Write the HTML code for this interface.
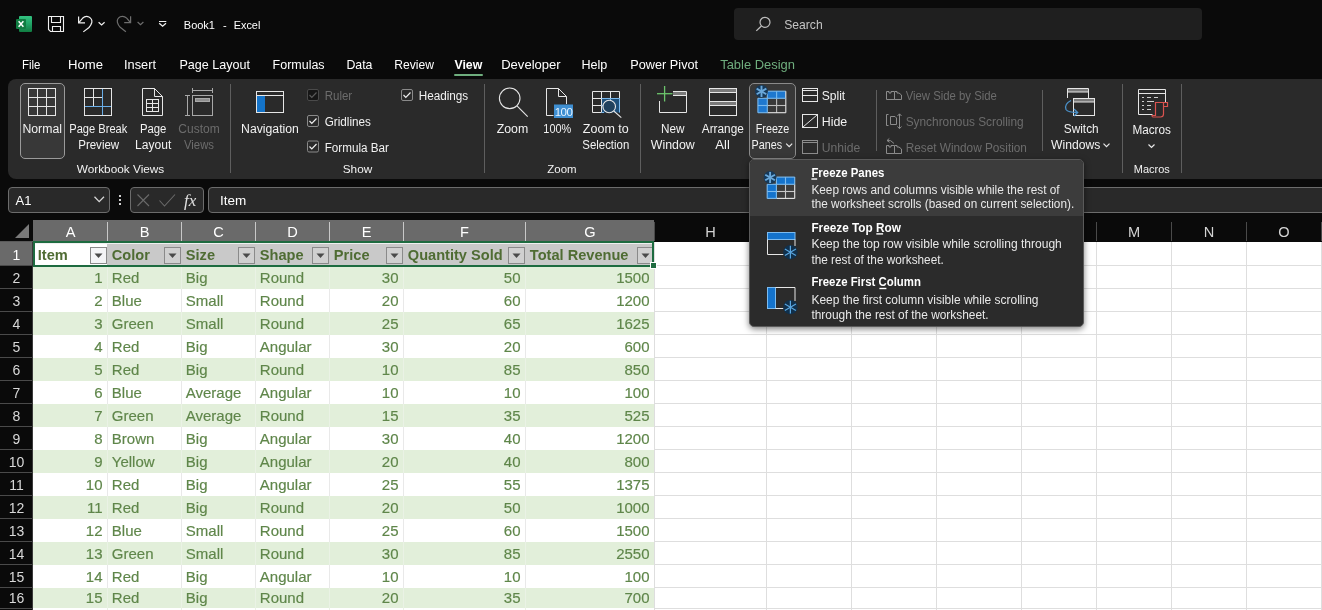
<!DOCTYPE html><html><head><meta charset="utf-8"><style>
html,body{margin:0;padding:0;background:#0a0a0a;}
#root{position:relative;width:1322px;height:610px;overflow:hidden;background:#0a0a0a;font-family:"Liberation Sans", sans-serif;}
.r{position:absolute;}
svg{position:absolute;left:0;top:0;overflow:visible;will-change:transform;font-family:"Liberation Sans", sans-serif;}
</style></head><body><div id="root">
<div class="r" style="left:734px;top:8px;width:468px;height:32px;background:#1f1f1f;border-radius:4px;"></div>
<div class="r" style="left:454px;top:74px;width:29px;height:2px;background:#6fae7e;border-radius:1px;"></div>
<div class="r" style="left:8px;top:79px;width:1330px;height:100px;background:#2a2a2a;border-radius:8px;"></div>
<div class="r" style="left:20px;top:83px;width:45px;height:76px;background:#383838;box-sizing:border-box;border:1px solid #9a9a9a;border-radius:5px;"></div>
<div class="r" style="left:749px;top:83px;width:47px;height:76px;background:#383838;box-sizing:border-box;border:1px solid #8a8a8a;border-radius:5px;"></div>
<div class="r" style="left:230px;top:84px;width:1px;height:89px;background:#5e5e5e;"></div>
<div class="r" style="left:484px;top:84px;width:1px;height:89px;background:#5e5e5e;"></div>
<div class="r" style="left:640px;top:84px;width:1px;height:89px;background:#5e5e5e;"></div>
<div class="r" style="left:876px;top:90px;width:1px;height:61px;background:#5e5e5e;"></div>
<div class="r" style="left:1042px;top:90px;width:1px;height:61px;background:#5e5e5e;"></div>
<div class="r" style="left:1122px;top:84px;width:1px;height:89px;background:#5e5e5e;"></div>
<div class="r" style="left:1181px;top:84px;width:1px;height:89px;background:#5e5e5e;"></div>
<div class="r" style="left:8px;top:187px;width:102px;height:26px;background:#292929;border:1px solid #6c6c6c;border-radius:4px;box-sizing:border-box;"></div>
<div class="r" style="left:118.5px;top:195px;width:2px;height:2px;background:#d0d0d0;"></div>
<div class="r" style="left:118.5px;top:199px;width:2px;height:2px;background:#d0d0d0;"></div>
<div class="r" style="left:118.5px;top:203px;width:2px;height:2px;background:#d0d0d0;"></div>
<div class="r" style="left:130px;top:187px;width:74px;height:26px;background:#292929;border:1px solid #6c6c6c;border-radius:4px;box-sizing:border-box;"></div>
<div class="r" style="left:208px;top:187px;width:1120px;height:26px;background:#292929;border:1px solid #6c6c6c;border-radius:4px;box-sizing:border-box;"></div>
<div class="r" style="left:33px;top:220px;width:621px;height:22px;background:#6a6a6a;"></div>
<div class="r" style="left:107px;top:222px;width:1px;height:19px;background:#c8c8c8;"></div>
<div class="r" style="left:181px;top:222px;width:1px;height:19px;background:#c8c8c8;"></div>
<div class="r" style="left:255px;top:222px;width:1px;height:19px;background:#c8c8c8;"></div>
<div class="r" style="left:329px;top:222px;width:1px;height:19px;background:#c8c8c8;"></div>
<div class="r" style="left:403px;top:222px;width:1px;height:19px;background:#c8c8c8;"></div>
<div class="r" style="left:525px;top:222px;width:1px;height:19px;background:#c8c8c8;"></div>
<div class="r" style="left:654px;top:222px;width:1px;height:19px;background:#4a4a4a;"></div>
<div class="r" style="left:766px;top:222px;width:1px;height:19px;background:#4a4a4a;"></div>
<div class="r" style="left:851px;top:222px;width:1px;height:19px;background:#4a4a4a;"></div>
<div class="r" style="left:936px;top:222px;width:1px;height:19px;background:#4a4a4a;"></div>
<div class="r" style="left:1021px;top:222px;width:1px;height:19px;background:#4a4a4a;"></div>
<div class="r" style="left:1096px;top:222px;width:1px;height:19px;background:#4a4a4a;"></div>
<div class="r" style="left:1171px;top:222px;width:1px;height:19px;background:#4a4a4a;"></div>
<div class="r" style="left:1246px;top:222px;width:1px;height:19px;background:#4a4a4a;"></div>
<div class="r" style="left:1321px;top:222px;width:1px;height:19px;background:#4a4a4a;"></div>
<div class="r" style="left:33px;top:242px;width:1289px;height:368px;background:#ffffff;"></div>
<div class="r" style="left:0px;top:242px;width:33px;height:23px;background:#6a6a6a;"></div>
<div class="r" style="left:0px;top:265px;width:33px;height:1px;background:#4a4a4a;"></div>
<div class="r" style="left:0px;top:288px;width:33px;height:1px;background:#4a4a4a;"></div>
<div class="r" style="left:0px;top:311px;width:33px;height:1px;background:#4a4a4a;"></div>
<div class="r" style="left:0px;top:334px;width:33px;height:1px;background:#4a4a4a;"></div>
<div class="r" style="left:0px;top:357px;width:33px;height:1px;background:#4a4a4a;"></div>
<div class="r" style="left:0px;top:380px;width:33px;height:1px;background:#4a4a4a;"></div>
<div class="r" style="left:0px;top:403px;width:33px;height:1px;background:#4a4a4a;"></div>
<div class="r" style="left:0px;top:426px;width:33px;height:1px;background:#4a4a4a;"></div>
<div class="r" style="left:0px;top:449px;width:33px;height:1px;background:#4a4a4a;"></div>
<div class="r" style="left:0px;top:472px;width:33px;height:1px;background:#4a4a4a;"></div>
<div class="r" style="left:0px;top:495px;width:33px;height:1px;background:#4a4a4a;"></div>
<div class="r" style="left:0px;top:518px;width:33px;height:1px;background:#4a4a4a;"></div>
<div class="r" style="left:0px;top:541px;width:33px;height:1px;background:#4a4a4a;"></div>
<div class="r" style="left:0px;top:564px;width:33px;height:1px;background:#4a4a4a;"></div>
<div class="r" style="left:0px;top:587px;width:33px;height:1px;background:#4a4a4a;"></div>
<div class="r" style="left:0px;top:608px;width:33px;height:1px;background:#4a4a4a;"></div>
<div class="r" style="left:0px;top:241px;width:33px;height:1px;background:#5a5a5a;"></div>
<div class="r" style="left:32px;top:242px;width:1px;height:368px;background:#3a3a3a;"></div>
<div class="r" style="left:654px;top:265px;width:668px;height:1px;background:#dedede;"></div>
<div class="r" style="left:654px;top:288px;width:668px;height:1px;background:#dedede;"></div>
<div class="r" style="left:654px;top:311px;width:668px;height:1px;background:#dedede;"></div>
<div class="r" style="left:654px;top:334px;width:668px;height:1px;background:#dedede;"></div>
<div class="r" style="left:654px;top:357px;width:668px;height:1px;background:#dedede;"></div>
<div class="r" style="left:654px;top:380px;width:668px;height:1px;background:#dedede;"></div>
<div class="r" style="left:654px;top:403px;width:668px;height:1px;background:#dedede;"></div>
<div class="r" style="left:654px;top:426px;width:668px;height:1px;background:#dedede;"></div>
<div class="r" style="left:654px;top:449px;width:668px;height:1px;background:#dedede;"></div>
<div class="r" style="left:654px;top:472px;width:668px;height:1px;background:#dedede;"></div>
<div class="r" style="left:654px;top:495px;width:668px;height:1px;background:#dedede;"></div>
<div class="r" style="left:654px;top:518px;width:668px;height:1px;background:#dedede;"></div>
<div class="r" style="left:654px;top:541px;width:668px;height:1px;background:#dedede;"></div>
<div class="r" style="left:654px;top:564px;width:668px;height:1px;background:#dedede;"></div>
<div class="r" style="left:654px;top:587px;width:668px;height:1px;background:#dedede;"></div>
<div class="r" style="left:654px;top:608px;width:668px;height:1px;background:#dedede;"></div>
<div class="r" style="left:107px;top:242px;width:1px;height:368px;background:#e9e9e9;"></div>
<div class="r" style="left:181px;top:242px;width:1px;height:368px;background:#e9e9e9;"></div>
<div class="r" style="left:255px;top:242px;width:1px;height:368px;background:#e9e9e9;"></div>
<div class="r" style="left:329px;top:242px;width:1px;height:368px;background:#e9e9e9;"></div>
<div class="r" style="left:403px;top:242px;width:1px;height:368px;background:#e9e9e9;"></div>
<div class="r" style="left:525px;top:242px;width:1px;height:368px;background:#e9e9e9;"></div>
<div class="r" style="left:654px;top:242px;width:1px;height:368px;background:#dedede;"></div>
<div class="r" style="left:766px;top:242px;width:1px;height:368px;background:#dedede;"></div>
<div class="r" style="left:851px;top:242px;width:1px;height:368px;background:#dedede;"></div>
<div class="r" style="left:936px;top:242px;width:1px;height:368px;background:#dedede;"></div>
<div class="r" style="left:1021px;top:242px;width:1px;height:368px;background:#dedede;"></div>
<div class="r" style="left:1096px;top:242px;width:1px;height:368px;background:#dedede;"></div>
<div class="r" style="left:1171px;top:242px;width:1px;height:368px;background:#dedede;"></div>
<div class="r" style="left:1246px;top:242px;width:1px;height:368px;background:#dedede;"></div>
<div class="r" style="left:1321px;top:242px;width:1px;height:368px;background:#dedede;"></div>
<div class="r" style="left:33px;top:266px;width:621px;height:23px;background:#e2efda;"></div>
<div class="r" style="left:107px;top:266px;width:1px;height:23px;background:#eaf2e5;"></div>
<div class="r" style="left:181px;top:266px;width:1px;height:23px;background:#eaf2e5;"></div>
<div class="r" style="left:255px;top:266px;width:1px;height:23px;background:#eaf2e5;"></div>
<div class="r" style="left:329px;top:266px;width:1px;height:23px;background:#eaf2e5;"></div>
<div class="r" style="left:403px;top:266px;width:1px;height:23px;background:#eaf2e5;"></div>
<div class="r" style="left:525px;top:266px;width:1px;height:23px;background:#eaf2e5;"></div>
<div class="r" style="left:33px;top:312px;width:621px;height:23px;background:#e2efda;"></div>
<div class="r" style="left:107px;top:312px;width:1px;height:23px;background:#eaf2e5;"></div>
<div class="r" style="left:181px;top:312px;width:1px;height:23px;background:#eaf2e5;"></div>
<div class="r" style="left:255px;top:312px;width:1px;height:23px;background:#eaf2e5;"></div>
<div class="r" style="left:329px;top:312px;width:1px;height:23px;background:#eaf2e5;"></div>
<div class="r" style="left:403px;top:312px;width:1px;height:23px;background:#eaf2e5;"></div>
<div class="r" style="left:525px;top:312px;width:1px;height:23px;background:#eaf2e5;"></div>
<div class="r" style="left:33px;top:358px;width:621px;height:23px;background:#e2efda;"></div>
<div class="r" style="left:107px;top:358px;width:1px;height:23px;background:#eaf2e5;"></div>
<div class="r" style="left:181px;top:358px;width:1px;height:23px;background:#eaf2e5;"></div>
<div class="r" style="left:255px;top:358px;width:1px;height:23px;background:#eaf2e5;"></div>
<div class="r" style="left:329px;top:358px;width:1px;height:23px;background:#eaf2e5;"></div>
<div class="r" style="left:403px;top:358px;width:1px;height:23px;background:#eaf2e5;"></div>
<div class="r" style="left:525px;top:358px;width:1px;height:23px;background:#eaf2e5;"></div>
<div class="r" style="left:33px;top:404px;width:621px;height:23px;background:#e2efda;"></div>
<div class="r" style="left:107px;top:404px;width:1px;height:23px;background:#eaf2e5;"></div>
<div class="r" style="left:181px;top:404px;width:1px;height:23px;background:#eaf2e5;"></div>
<div class="r" style="left:255px;top:404px;width:1px;height:23px;background:#eaf2e5;"></div>
<div class="r" style="left:329px;top:404px;width:1px;height:23px;background:#eaf2e5;"></div>
<div class="r" style="left:403px;top:404px;width:1px;height:23px;background:#eaf2e5;"></div>
<div class="r" style="left:525px;top:404px;width:1px;height:23px;background:#eaf2e5;"></div>
<div class="r" style="left:33px;top:450px;width:621px;height:23px;background:#e2efda;"></div>
<div class="r" style="left:107px;top:450px;width:1px;height:23px;background:#eaf2e5;"></div>
<div class="r" style="left:181px;top:450px;width:1px;height:23px;background:#eaf2e5;"></div>
<div class="r" style="left:255px;top:450px;width:1px;height:23px;background:#eaf2e5;"></div>
<div class="r" style="left:329px;top:450px;width:1px;height:23px;background:#eaf2e5;"></div>
<div class="r" style="left:403px;top:450px;width:1px;height:23px;background:#eaf2e5;"></div>
<div class="r" style="left:525px;top:450px;width:1px;height:23px;background:#eaf2e5;"></div>
<div class="r" style="left:33px;top:496px;width:621px;height:23px;background:#e2efda;"></div>
<div class="r" style="left:107px;top:496px;width:1px;height:23px;background:#eaf2e5;"></div>
<div class="r" style="left:181px;top:496px;width:1px;height:23px;background:#eaf2e5;"></div>
<div class="r" style="left:255px;top:496px;width:1px;height:23px;background:#eaf2e5;"></div>
<div class="r" style="left:329px;top:496px;width:1px;height:23px;background:#eaf2e5;"></div>
<div class="r" style="left:403px;top:496px;width:1px;height:23px;background:#eaf2e5;"></div>
<div class="r" style="left:525px;top:496px;width:1px;height:23px;background:#eaf2e5;"></div>
<div class="r" style="left:33px;top:542px;width:621px;height:23px;background:#e2efda;"></div>
<div class="r" style="left:107px;top:542px;width:1px;height:23px;background:#eaf2e5;"></div>
<div class="r" style="left:181px;top:542px;width:1px;height:23px;background:#eaf2e5;"></div>
<div class="r" style="left:255px;top:542px;width:1px;height:23px;background:#eaf2e5;"></div>
<div class="r" style="left:329px;top:542px;width:1px;height:23px;background:#eaf2e5;"></div>
<div class="r" style="left:403px;top:542px;width:1px;height:23px;background:#eaf2e5;"></div>
<div class="r" style="left:525px;top:542px;width:1px;height:23px;background:#eaf2e5;"></div>
<div class="r" style="left:33px;top:588px;width:621px;height:20px;background:#e2efda;"></div>
<div class="r" style="left:107px;top:588px;width:1px;height:23px;background:#eaf2e5;"></div>
<div class="r" style="left:181px;top:588px;width:1px;height:23px;background:#eaf2e5;"></div>
<div class="r" style="left:255px;top:588px;width:1px;height:23px;background:#eaf2e5;"></div>
<div class="r" style="left:329px;top:588px;width:1px;height:23px;background:#eaf2e5;"></div>
<div class="r" style="left:403px;top:588px;width:1px;height:23px;background:#eaf2e5;"></div>
<div class="r" style="left:525px;top:588px;width:1px;height:23px;background:#eaf2e5;"></div>
<div class="r" style="left:33px;top:242px;width:621px;height:23px;background:#c9c9c9;"></div>
<div class="r" style="left:35px;top:243px;width:72px;height:22px;background:#ffffff;"></div>
<div class="r" style="left:35px;top:243px;width:617px;height:1px;background:#f0f0f0;"></div>
<div class="r" style="left:90px;top:247px;width:17px;height:17px;background:#f4f4f6;box-sizing:border-box;border:1px solid #8a8a8a;"></div>
<div class="r" style="left:164px;top:247px;width:17px;height:17px;background:#d0d0d0;box-sizing:border-box;border:1px solid #8a8a8a;"></div>
<div class="r" style="left:238px;top:247px;width:17px;height:17px;background:#d0d0d0;box-sizing:border-box;border:1px solid #8a8a8a;"></div>
<div class="r" style="left:312px;top:247px;width:17px;height:17px;background:#d0d0d0;box-sizing:border-box;border:1px solid #8a8a8a;"></div>
<div class="r" style="left:386px;top:247px;width:17px;height:17px;background:#d0d0d0;box-sizing:border-box;border:1px solid #8a8a8a;"></div>
<div class="r" style="left:508px;top:247px;width:17px;height:17px;background:#d0d0d0;box-sizing:border-box;border:1px solid #8a8a8a;"></div>
<div class="r" style="left:637px;top:247px;width:17px;height:17px;background:#d0d0d0;box-sizing:border-box;border:1px solid #8a8a8a;"></div>
<div class="r" style="left:33px;top:241px;width:621px;height:26px;box-sizing:border-box;border:2px solid #1e6b40;"></div>
<div class="r" style="left:651px;top:263px;width:5px;height:5px;background:#1e6b40;outline:1px solid #fff;"></div>
<svg width="1322" height="610"><circle cx="765" cy="22.3" r="5" fill="none" stroke="#bdbdbd" stroke-width="1.2"/><line x1="761.4" y1="26" x2="756.3" y2="30.9" stroke="#bdbdbd" stroke-width="1.3"/><text x="784.20" y="29.00" font-size="12.15" fill="#c4c4c4">Search</text><text x="183.80" y="29.00" font-size="11" fill="#ffffff">Book1</text><text x="223.00" y="29.00" font-size="11" fill="#ffffff">-</text><text x="233.70" y="29.00" font-size="10.9" fill="#ffffff">Excel</text><defs><linearGradient id="xg" x1="0" y1="0" x2="0" y2="1"><stop offset="0" stop-color="#33c481"/><stop offset="0.5" stop-color="#21a366"/><stop offset="1" stop-color="#107c41"/></linearGradient></defs><rect x="19" y="16" width="13" height="16" rx="1" fill="url(#xg)"/><rect x="16" y="19" width="10" height="10" rx="1" fill="#107c41"/><path d="M18.6,21.3 L23.4,26.7 M23.4,21.3 L18.6,26.7" stroke="#ffffff" stroke-width="1.5"/><path d="M48.5,16.5 H63.5 V31.5 H50.5 L48.5,29.5 Z" fill="none" stroke="#f0f0f0" stroke-width="1.1"/><path d="M51.5,16.5 V22.5 H60.5 V16.5" fill="none" stroke="#f0f0f0" stroke-width="1.1"/><path d="M52.5,31.5 V26.5 H60.5 V31.5" fill="none" stroke="#f0f0f0" stroke-width="1.1"/><path d="M78.6,16.4 V22.9 H85" fill="none" stroke="#f0f0f0" stroke-width="1.2"/><path d="M78.8,22.7 L82.5,18.3 Q85.5,15.5 89,17 Q92.5,19 91.8,22.5 Q91.2,25 89,27.5 L83.3,31.9" fill="none" stroke="#f0f0f0" stroke-width="1.2"/><polyline points="98.6,22.3 101.6,25 104.6,22.3" fill="none" stroke="#f0f0f0" stroke-width="1.2"/><path d="M130.6,16.2 V22.7 H124.2" fill="none" stroke="#6e6e6e" stroke-width="1.2"/><path d="M130.4,22.5 L126.7,18.1 Q123.7,15.3 120.2,16.8 Q116.7,18.8 117.4,22.3 Q118,24.8 120.2,27.3 L125.9,31.7" fill="none" stroke="#6e6e6e" stroke-width="1.2"/><polyline points="137.6,22 140.5,24.6 143.4,22" fill="none" stroke="#6e6e6e" stroke-width="1.2"/><line x1="159" y1="21.5" x2="166.3" y2="21.5" stroke="#f0f0f0" stroke-width="1"/><polyline points="159.2,23.2 162.6,26.2 166,23.2" fill="none" stroke="#f0f0f0" stroke-width="1.3"/><text x="22.00" y="69.30" font-size="12.9" fill="#ffffff" textLength="18.5" lengthAdjust="spacingAndGlyphs">File</text><text x="68.00" y="69.30" font-size="12.9" fill="#ffffff" textLength="35.0" lengthAdjust="spacingAndGlyphs">Home</text><text x="124.00" y="69.30" font-size="12.9" fill="#ffffff" textLength="32.0" lengthAdjust="spacingAndGlyphs">Insert</text><text x="179.40" y="69.30" font-size="12.57" fill="#ffffff" textLength="70.6" lengthAdjust="spacingAndGlyphs">Page Layout</text><text x="272.60" y="69.30" font-size="12.48" fill="#ffffff" textLength="52.0" lengthAdjust="spacingAndGlyphs">Formulas</text><text x="346.40" y="69.30" font-size="12.9" fill="#ffffff" textLength="26.1" lengthAdjust="spacingAndGlyphs">Data</text><text x="394.30" y="69.30" font-size="12.9" fill="#ffffff" textLength="39.7" lengthAdjust="spacingAndGlyphs">Review</text><text x="454.40" y="69.30" font-size="12.39" fill="#ffffff" font-weight="bold" textLength="27.9" lengthAdjust="spacingAndGlyphs">View</text><text x="501.20" y="69.30" font-size="13" fill="#ffffff" textLength="59.5" lengthAdjust="spacingAndGlyphs">Developer</text><text x="581.40" y="69.30" font-size="12.9" fill="#ffffff" textLength="25.9" lengthAdjust="spacingAndGlyphs">Help</text><text x="630.30" y="69.30" font-size="12.7" fill="#ffffff" textLength="67.8" lengthAdjust="spacingAndGlyphs">Power Pivot</text><text x="720.20" y="69.30" font-size="12.9" fill="#6fae7e" textLength="74.8" lengthAdjust="spacingAndGlyphs">Table Design</text><text x="42.20" y="132.70" font-size="12" fill="#f2f2f2" text-anchor="middle" textLength="39.5" lengthAdjust="spacingAndGlyphs">Normal</text><text x="98.30" y="132.70" font-size="12" fill="#f2f2f2" text-anchor="middle" textLength="58.0" lengthAdjust="spacingAndGlyphs">Page Break</text><text x="98.70" y="148.60" font-size="12" fill="#f2f2f2" text-anchor="middle" textLength="41.0" lengthAdjust="spacingAndGlyphs">Preview</text><text x="153.20" y="132.70" font-size="12" fill="#f2f2f2" text-anchor="middle" textLength="26.5" lengthAdjust="spacingAndGlyphs">Page</text><text x="153.20" y="148.60" font-size="12" fill="#f2f2f2" text-anchor="middle" textLength="36.2" lengthAdjust="spacingAndGlyphs">Layout</text><text x="199.00" y="132.70" font-size="12" fill="#6c6c6c" text-anchor="middle" textLength="41.3" lengthAdjust="spacingAndGlyphs">Custom</text><text x="199.00" y="148.60" font-size="12" fill="#6c6c6c" text-anchor="middle" textLength="30.0" lengthAdjust="spacingAndGlyphs">Views</text><text x="120.50" y="173.30" font-size="11.2" fill="#f2f2f2" text-anchor="middle" textLength="87.5" lengthAdjust="spacingAndGlyphs">Workbook Views</text><text x="270.00" y="133.00" font-size="12" fill="#f2f2f2" text-anchor="middle" textLength="57.8" lengthAdjust="spacingAndGlyphs">Navigation</text><text x="324.70" y="100.00" font-size="12" fill="#6c6c6c" textLength="27.5" lengthAdjust="spacingAndGlyphs">Ruler</text><text x="324.70" y="126.00" font-size="12" fill="#f2f2f2" textLength="46.2" lengthAdjust="spacingAndGlyphs">Gridlines</text><text x="324.70" y="152.00" font-size="12" fill="#f2f2f2" textLength="64.3" lengthAdjust="spacingAndGlyphs">Formula Bar</text><text x="418.70" y="100.00" font-size="12" fill="#f2f2f2" textLength="49.5" lengthAdjust="spacingAndGlyphs">Headings</text><text x="357.50" y="173.30" font-size="11.2" fill="#f2f2f2" text-anchor="middle" textLength="29.5" lengthAdjust="spacingAndGlyphs">Show</text><text x="512.50" y="133.00" font-size="12" fill="#f2f2f2" text-anchor="middle" textLength="31.5" lengthAdjust="spacingAndGlyphs">Zoom</text><text x="557.30" y="133.00" font-size="12" fill="#f2f2f2" text-anchor="middle" textLength="27.9" lengthAdjust="spacingAndGlyphs">100%</text><text x="605.80" y="133.00" font-size="12" fill="#f2f2f2" text-anchor="middle" textLength="45.9" lengthAdjust="spacingAndGlyphs">Zoom to</text><text x="605.80" y="148.60" font-size="12" fill="#f2f2f2" text-anchor="middle" textLength="47.0" lengthAdjust="spacingAndGlyphs">Selection</text><text x="562.00" y="173.30" font-size="11.2" fill="#f2f2f2" text-anchor="middle" textLength="29.3" lengthAdjust="spacingAndGlyphs">Zoom</text><text x="672.80" y="133.00" font-size="12" fill="#f2f2f2" text-anchor="middle" textLength="23.5" lengthAdjust="spacingAndGlyphs">New</text><text x="672.80" y="148.60" font-size="12" fill="#f2f2f2" text-anchor="middle" textLength="44.0" lengthAdjust="spacingAndGlyphs">Window</text><text x="722.80" y="133.00" font-size="12" fill="#f2f2f2" text-anchor="middle" textLength="42.0" lengthAdjust="spacingAndGlyphs">Arrange</text><text x="722.60" y="148.60" font-size="12" fill="#f2f2f2" text-anchor="middle" textLength="14.5" lengthAdjust="spacingAndGlyphs">All</text><text x="772.50" y="133.00" font-size="12" fill="#f2f2f2" text-anchor="middle" textLength="33.5" lengthAdjust="spacingAndGlyphs">Freeze</text><text x="751.60" y="148.60" font-size="12" fill="#f2f2f2" textLength="30.5" lengthAdjust="spacingAndGlyphs">Panes</text><text x="821.70" y="100.00" font-size="12" fill="#f2f2f2" textLength="23.5" lengthAdjust="spacingAndGlyphs">Split</text><text x="821.70" y="126.00" font-size="12" fill="#f2f2f2" textLength="25.5" lengthAdjust="spacingAndGlyphs">Hide</text><text x="821.70" y="152.00" font-size="12" fill="#6c6c6c" textLength="38.5" lengthAdjust="spacingAndGlyphs">Unhide</text><text x="905.70" y="100.00" font-size="12" fill="#6c6c6c" textLength="91.2" lengthAdjust="spacingAndGlyphs">View Side by Side</text><text x="905.70" y="126.00" font-size="12" fill="#6c6c6c" textLength="118.0" lengthAdjust="spacingAndGlyphs">Synchronous Scrolling</text><text x="905.70" y="152.00" font-size="12" fill="#6c6c6c" textLength="121.2" lengthAdjust="spacingAndGlyphs">Reset Window Position</text><text x="1081.20" y="133.00" font-size="12" fill="#f2f2f2" text-anchor="middle" textLength="34.9" lengthAdjust="spacingAndGlyphs">Switch</text><text x="1051.00" y="148.60" font-size="12" fill="#f2f2f2" textLength="49.3" lengthAdjust="spacingAndGlyphs">Windows</text><text x="1151.70" y="134.00" font-size="12" fill="#f2f2f2" text-anchor="middle" textLength="38.5" lengthAdjust="spacingAndGlyphs">Macros</text><text x="1151.80" y="173.30" font-size="11.2" fill="#f2f2f2" text-anchor="middle" textLength="36.0" lengthAdjust="spacingAndGlyphs">Macros</text><rect x="28.5" y="88.5" width="27" height="27" fill="none" stroke="#e6e6e6"/><line x1="37.5" y1="88.5" x2="37.5" y2="115.5" stroke="#e6e6e6"/><line x1="46.5" y1="88.5" x2="46.5" y2="115.5" stroke="#e6e6e6"/><line x1="28.5" y1="97.5" x2="55.5" y2="97.5" stroke="#e6e6e6"/><line x1="28.5" y1="106.5" x2="55.5" y2="106.5" stroke="#e6e6e6"/><rect x="84.5" y="88.5" width="27" height="27" fill="none" stroke="#e6e6e6"/><line x1="93.5" y1="88.5" x2="93.5" y2="106.5" stroke="#e6e6e6"/><line x1="84.5" y1="97.5" x2="102.5" y2="97.5" stroke="#e6e6e6"/><line x1="102.5" y1="89" x2="102.5" y2="115" stroke="#6aaee8"/><line x1="85" y1="106.5" x2="111" y2="106.5" stroke="#6aaee8"/><path d="M142.5,88.5 H154.5 L162.5,96.5 V115.5 H142.5 Z" fill="none" stroke="#e6e6e6"/><path d="M154.5,88.5 V96.5 H162.5" fill="none" stroke="#e6e6e6"/><rect x="146.5" y="99.5" width="12" height="12" fill="none" stroke="#e6e6e6"/><line x1="152.5" y1="99.5" x2="152.5" y2="111.5" stroke="#e6e6e6"/><line x1="146.5" y1="103.5" x2="158.5" y2="103.5" stroke="#e6e6e6"/><line x1="146.5" y1="107.5" x2="158.5" y2="107.5" stroke="#e6e6e6"/><line x1="192.5" y1="90.5" x2="212.5" y2="90.5" stroke="#a8a8a8"/><line x1="192.5" y1="88" x2="192.5" y2="93" stroke="#a8a8a8"/><line x1="212.5" y1="88" x2="212.5" y2="93" stroke="#a8a8a8"/><line x1="187.5" y1="95.5" x2="187.5" y2="115.5" stroke="#a8a8a8"/><line x1="185" y1="95.5" x2="190" y2="95.5" stroke="#a8a8a8"/><line x1="185" y1="115.5" x2="190" y2="115.5" stroke="#a8a8a8"/><rect x="192.5" y="95.5" width="20" height="20" fill="none" stroke="#a8a8a8"/><rect x="195.5" y="98.5" width="14" height="3" fill="#8f8f8f" stroke="#a8a8a8"/><rect x="256.5" y="91.5" width="27" height="21" fill="none" stroke="#e6e6e6"/><line x1="256.5" y1="95.5" x2="283.5" y2="95.5" stroke="#e6e6e6"/><rect x="257" y="96" width="8" height="16" fill="#1473c8"/><rect x="307.5" y="89.5" width="11" height="11" rx="1.5" fill="#161616" stroke="#4a4a4a"/><polyline points="309.5,95 311.8,97.3 316.5,92.5" fill="none" stroke="#5a5a5a" stroke-width="1.2"/><rect x="307.5" y="115.5" width="11" height="11" rx="1.5" fill="none" stroke="#8a8a8a"/><polyline points="309.5,121 311.8,123.3 316.5,118.5" fill="none" stroke="#f0f0f0" stroke-width="1.2"/><rect x="307.5" y="141.0" width="11" height="11" rx="1.5" fill="none" stroke="#8a8a8a"/><polyline points="309.5,146.5 311.8,148.8 316.5,144.0" fill="none" stroke="#f0f0f0" stroke-width="1.2"/><rect x="401.5" y="89.5" width="11" height="11" rx="1.5" fill="none" stroke="#8a8a8a"/><polyline points="403.5,95 405.8,97.3 410.5,92.5" fill="none" stroke="#f0f0f0" stroke-width="1.2"/><circle cx="509.7" cy="98.3" r="10.3" fill="none" stroke="#e6e6e6" stroke-width="1.1"/><line x1="517" y1="105.8" x2="527.7" y2="116.6" stroke="#e6e6e6" stroke-width="1.1"/><path d="M553.5,115.5 H546.5 V88.5 H558.5 L566.5,96.5 V104" fill="none" stroke="#e6e6e6"/><path d="M558.5,88.5 V96.5 H566.5" fill="none" stroke="#e6e6e6"/><rect x="554" y="104.5" width="19" height="13.5" fill="#3f8fd2"/><text x="563.5" y="116" text-anchor="middle" font-size="11.5" fill="#e6f3ff" letter-spacing="-0.6">100</text><rect x="602" y="98.5" width="18" height="14" fill="#1d4f7a"/><line x1="592.5" y1="91.5" x2="619.5" y2="91.5" stroke="#e6e6e6"/><line x1="592.5" y1="91.5" x2="592.5" y2="112.5" stroke="#e6e6e6"/><line x1="592.5" y1="112.5" x2="601.5" y2="112.5" stroke="#e6e6e6"/><line x1="592.5" y1="98.5" x2="601.5" y2="98.5" stroke="#e6e6e6"/><line x1="592.5" y1="105.5" x2="601.5" y2="105.5" stroke="#e6e6e6"/><line x1="601.5" y1="91.5" x2="601.5" y2="112.5" stroke="#e6e6e6"/><line x1="610.5" y1="91.5" x2="610.5" y2="98.5" stroke="#e6e6e6"/><line x1="619.5" y1="91.5" x2="619.5" y2="98.5" stroke="#e6e6e6"/><line x1="601.5" y1="98.5" x2="619.5" y2="98.5" stroke="#7ab8ec"/><line x1="619.5" y1="98.5" x2="619.5" y2="112.5" stroke="#7ab8ec"/><line x1="601.5" y1="112.5" x2="604" y2="112.5" stroke="#7ab8ec"/><line x1="610.5" y1="98.5" x2="610.5" y2="100" stroke="#7ab8ec"/><line x1="601.5" y1="105.5" x2="603" y2="105.5" stroke="#7ab8ec"/><circle cx="609.2" cy="106.5" r="6.3" fill="#292929" fill-opacity="0.35" stroke="#e6e6e6" stroke-width="1.1"/><line x1="613.8" y1="111" x2="621.3" y2="117.7" stroke="#e6e6e6" stroke-width="1.1"/><path d="M659.5,101 V112.5 H686.5 V91.5 H673" fill="none" stroke="#e6e6e6"/><rect x="673" y="92" width="13" height="3.5" fill="#7a7a7a"/><line x1="673" y1="95.5" x2="686.5" y2="95.5" stroke="#e6e6e6"/><line x1="664.6" y1="86" x2="664.6" y2="101.5" stroke="#6cc46c" stroke-width="1.3"/><line x1="657" y1="93.7" x2="672.5" y2="93.7" stroke="#6cc46c" stroke-width="1.3"/><rect x="709.5" y="88.5" width="27" height="27" fill="none" stroke="#e6e6e6"/><rect x="710" y="89" width="26" height="3.5" fill="#7a7a7a"/><rect x="710" y="101.5" width="26" height="4" fill="#7a7a7a"/><line x1="709.5" y1="92.5" x2="736.5" y2="92.5" stroke="#e6e6e6"/><line x1="709.5" y1="101.5" x2="736.5" y2="101.5" stroke="#e6e6e6"/><line x1="709.5" y1="105.5" x2="736.5" y2="105.5" stroke="#e6e6e6"/><rect x="767.3" y="91.2" width="18.5" height="7.1" fill="#1e78cf"/><rect x="757.9" y="98.3" width="9.4" height="14.4" fill="#1e78cf"/><line x1="767.3" y1="105.5" x2="785.8" y2="105.5" stroke="#bdbdbd" stroke-width="1.1"/><line x1="776.6" y1="98.3" x2="776.6" y2="112.7" stroke="#bdbdbd" stroke-width="1.1"/><line x1="767.3" y1="91.2" x2="785.8" y2="91.2" stroke="#78b9ee" stroke-width="1.1"/><line x1="785.8" y1="91.2" x2="785.8" y2="112.7" stroke="#e6e6e6" stroke-width="1.1"/><line x1="767.3" y1="112.7" x2="785.8" y2="112.7" stroke="#e6e6e6" stroke-width="1.1"/><line x1="757.9" y1="112.7" x2="767.3" y2="112.7" stroke="#78b9ee" stroke-width="1.1"/><line x1="757.9" y1="98.3" x2="785.8" y2="98.3" stroke="#78b9ee" stroke-width="1.1"/><line x1="767.3" y1="91.2" x2="767.3" y2="112.7" stroke="#78b9ee" stroke-width="1.1"/><line x1="757.9" y1="98.3" x2="757.9" y2="112.7" stroke="#78b9ee" stroke-width="1.1"/><line x1="757.9" y1="105.5" x2="767.3" y2="105.5" stroke="#78b9ee" stroke-width="1.1"/><line x1="776.6" y1="91.2" x2="776.6" y2="98.3" stroke="#78b9ee" stroke-width="1.1"/><circle cx="761.5" cy="91.4" r="6.3999999999999995" fill="#15395a"/><line x1="761.50" y1="85.80" x2="761.50" y2="97.00" stroke="#6aa8da" stroke-width="1.9"/><line x1="766.35" y1="88.60" x2="756.65" y2="94.20" stroke="#6aa8da" stroke-width="1.9"/><line x1="766.35" y1="94.20" x2="756.65" y2="88.60" stroke="#6aa8da" stroke-width="1.9"/><rect x="802.5" y="88.5" width="15" height="13" fill="none" stroke="#e6e6e6"/><line x1="802.5" y1="90.5" x2="817.5" y2="90.5" stroke="#e6e6e6"/><line x1="802.5" y1="95.5" x2="817.5" y2="95.5" stroke="#e6e6e6"/><rect x="802.5" y="114.5" width="15" height="13" fill="none" stroke="#e6e6e6"/><line x1="803" y1="127" x2="817" y2="115" stroke="#e6e6e6"/><rect x="802.5" y="140.5" width="15" height="13" fill="none" stroke="#8c8c8c"/><line x1="802.5" y1="142.5" x2="817.5" y2="142.5" stroke="#8c8c8c"/><path d="M886.5,99.5 V91.5 H889 V93 H891 V91.5 H894 L894.5,92 V99.5 Z" fill="none" stroke="#8c8c8c"/><path d="M894.5,99.5 V91.5 H897 V93 H899 L901.5,95 V99.5 Z" fill="none" stroke="#8c8c8c"/><path d="M888.5,114.5 H886.5 V125.5 H888.5 M890.5,116.5 V124.5 H896.5 V118 L895,116.5 Z" fill="none" stroke="#8c8c8c"/><path d="M899.5,114 V128.5 M897.5,116 L899.5,113.8 L901.5,116 M897.5,126.5 L899.5,128.7 L901.5,126.5" fill="none" stroke="#8c8c8c"/><path d="M886.5,153.5 V145.5 H889 V147 H891 V145.5 H894 L894.5,146 V153.5 Z" fill="none" stroke="#8c8c8c"/><path d="M894.5,153.5 V145.5 H897 V147 H899 L901.5,149 V153.5 Z" fill="none" stroke="#8c8c8c"/><path d="M894,143.5 Q891,139.5 887,140.5 M887,140.5 L889.3,138.5 M887,140.5 L889.5,142.3" fill="none" stroke="#8c8c8c"/><path d="M1067.5,98 V88.5 H1088.5 V98" fill="none" stroke="#e6e6e6"/><rect x="1068" y="89" width="20" height="3" fill="#7a7a7a"/><line x1="1067.5" y1="92" x2="1088.5" y2="92" stroke="#e6e6e6"/><rect x="1073.5" y="98.5" width="21" height="17" fill="none" stroke="#e6e6e6"/><rect x="1074" y="99" width="20" height="3" fill="#7a7a7a"/><line x1="1073.5" y1="102" x2="1094.5" y2="102" stroke="#e6e6e6"/><path d="M1071,100.5 Q1064,104 1066,109.5 Q1068,112.5 1077.5,112.5 M1074,109 L1077.7,112.5 L1074,116" fill="none" stroke="#4a90c8" stroke-width="1.3"/><path d="M1152.5,114.5 H1138.5 V89.5 H1165.5 V102" fill="none" stroke="#e6e6e6"/><line x1="1138.5" y1="93.5" x2="1165.5" y2="93.5" stroke="#e6e6e6"/><line x1="1142" y1="97.5" x2="1144" y2="97.5" stroke="#cfcfcf" stroke-width="1"/><line x1="1147" y1="97.5" x2="1151" y2="97.5" stroke="#cfcfcf" stroke-width="1"/><line x1="1154" y1="97.5" x2="1158" y2="97.5" stroke="#cfcfcf" stroke-width="1"/><line x1="1142" y1="101.5" x2="1144" y2="101.5" stroke="#cfcfcf" stroke-width="1"/><line x1="1147" y1="101.5" x2="1154" y2="101.5" stroke="#cfcfcf" stroke-width="1"/><line x1="1142" y1="105.5" x2="1144" y2="105.5" stroke="#cfcfcf" stroke-width="1"/><line x1="1147" y1="105.5" x2="1151" y2="105.5" stroke="#cfcfcf" stroke-width="1"/><line x1="1142" y1="109.5" x2="1144" y2="109.5" stroke="#cfcfcf" stroke-width="1"/><line x1="1147" y1="109.5" x2="1151" y2="109.5" stroke="#cfcfcf" stroke-width="1"/><path d="M1155.5,115.5 V102.5 H1167.5 V106.5 H1163.5 V114 Q1163.5,117 1160.5,117 H1153 Q1152,117 1152,115.5 Z M1163.5,102.5 V106.5" fill="#292929" stroke="#d9534f" stroke-width="1.2"/><polyline points="786.2,143.7 789.2,146.7 792.2,143.7" fill="none" stroke="#e8e8e8" stroke-width="1.2"/><polyline points="1103.5,143.7 1106.5,146.7 1109.5,143.7" fill="none" stroke="#e8e8e8" stroke-width="1.2"/><polyline points="1148.5,144.5 1151.5,147.5 1154.5,144.5" fill="none" stroke="#e8e8e8" stroke-width="1.2"/><text x="15.50" y="205.00" font-size="13" fill="#ffffff">A1</text><polyline points="94.5,196.8 99.2,201.6 104,196.8" fill="none" stroke="#d6d6d6" stroke-width="1.3"/><line x1="137.5" y1="194.5" x2="149" y2="206" stroke="#6a6a6a" stroke-width="1.1"/><line x1="149" y1="194.5" x2="137.5" y2="206" stroke="#6a6a6a" stroke-width="1.1"/><polyline points="159.5,200.5 164.5,206 175,194.5" fill="none" stroke="#6a6a6a" stroke-width="1.1"/><text x="184" y="205.5" font-family="Liberation Serif" font-style="italic" font-size="17" fill="#e0e0e0">fx</text><text x="220.00" y="205.00" font-size="13.5" fill="#ffffff">Item</text><text x="70.50" y="236.60" font-size="14.6" fill="#ffffff" text-anchor="middle">A</text><text x="144.50" y="236.60" font-size="14.6" fill="#ffffff" text-anchor="middle">B</text><text x="218.50" y="236.60" font-size="14.6" fill="#ffffff" text-anchor="middle">C</text><text x="292.50" y="236.60" font-size="14.6" fill="#ffffff" text-anchor="middle">D</text><text x="366.50" y="236.60" font-size="14.6" fill="#ffffff" text-anchor="middle">E</text><text x="464.50" y="236.60" font-size="14.6" fill="#ffffff" text-anchor="middle">F</text><text x="590.00" y="236.60" font-size="14.6" fill="#ffffff" text-anchor="middle">G</text><text x="710.50" y="236.60" font-size="14.6" fill="#d4d4d4" text-anchor="middle">H</text><text x="809.00" y="236.60" font-size="14.6" fill="#d4d4d4" text-anchor="middle">I</text><text x="894.00" y="236.60" font-size="14.6" fill="#d4d4d4" text-anchor="middle">J</text><text x="979.00" y="236.60" font-size="14.6" fill="#d4d4d4" text-anchor="middle">K</text><text x="1059.00" y="236.60" font-size="14.6" fill="#d4d4d4" text-anchor="middle">L</text><text x="1134.00" y="236.60" font-size="14.6" fill="#d4d4d4" text-anchor="middle">M</text><text x="1209.00" y="236.60" font-size="14.6" fill="#d4d4d4" text-anchor="middle">N</text><text x="1284.00" y="236.60" font-size="14.6" fill="#d4d4d4" text-anchor="middle">O</text><polygon points="29,224 29,238 15,238" fill="#7a7a7a"/><text x="16.50" y="260.40" font-size="14" fill="#ffffff" text-anchor="middle">1</text><text x="16.50" y="283.40" font-size="14" fill="#d8d8d8" text-anchor="middle">2</text><text x="16.50" y="306.40" font-size="14" fill="#d8d8d8" text-anchor="middle">3</text><text x="16.50" y="329.40" font-size="14" fill="#d8d8d8" text-anchor="middle">4</text><text x="16.50" y="352.40" font-size="14" fill="#d8d8d8" text-anchor="middle">5</text><text x="16.50" y="375.40" font-size="14" fill="#d8d8d8" text-anchor="middle">6</text><text x="16.50" y="398.40" font-size="14" fill="#d8d8d8" text-anchor="middle">7</text><text x="16.50" y="421.40" font-size="14" fill="#d8d8d8" text-anchor="middle">8</text><text x="16.50" y="444.40" font-size="14" fill="#d8d8d8" text-anchor="middle">9</text><text x="16.50" y="467.40" font-size="14" fill="#d8d8d8" text-anchor="middle">10</text><text x="16.50" y="490.40" font-size="14" fill="#d8d8d8" text-anchor="middle">11</text><text x="16.50" y="513.40" font-size="14" fill="#d8d8d8" text-anchor="middle">12</text><text x="16.50" y="536.40" font-size="14" fill="#d8d8d8" text-anchor="middle">13</text><text x="16.50" y="559.40" font-size="14" fill="#d8d8d8" text-anchor="middle">14</text><text x="16.50" y="582.40" font-size="14" fill="#d8d8d8" text-anchor="middle">15</text><text x="16.50" y="603.40" font-size="14" fill="#d8d8d8" text-anchor="middle">16</text><text x="102.50" y="283.00" font-size="15" fill="#5f864a" text-anchor="end" stroke="#5f864a" stroke-width="0.18">1</text><text x="111.80" y="283.00" font-size="15" fill="#5f864a" stroke="#5f864a" stroke-width="0.18">Red</text><text x="185.80" y="283.00" font-size="15" fill="#5f864a" stroke="#5f864a" stroke-width="0.18">Big</text><text x="259.80" y="283.00" font-size="15" fill="#5f864a" stroke="#5f864a" stroke-width="0.18">Round</text><text x="398.50" y="283.00" font-size="15" fill="#5f864a" text-anchor="end" stroke="#5f864a" stroke-width="0.18">30</text><text x="520.50" y="283.00" font-size="15" fill="#5f864a" text-anchor="end" stroke="#5f864a" stroke-width="0.18">50</text><text x="649.50" y="283.00" font-size="15" fill="#5f864a" text-anchor="end" stroke="#5f864a" stroke-width="0.18">1500</text><text x="102.50" y="306.00" font-size="15" fill="#5f864a" text-anchor="end" stroke="#5f864a" stroke-width="0.18">2</text><text x="111.80" y="306.00" font-size="15" fill="#5f864a" stroke="#5f864a" stroke-width="0.18">Blue</text><text x="185.80" y="306.00" font-size="15" fill="#5f864a" stroke="#5f864a" stroke-width="0.18">Small</text><text x="259.80" y="306.00" font-size="15" fill="#5f864a" stroke="#5f864a" stroke-width="0.18">Round</text><text x="398.50" y="306.00" font-size="15" fill="#5f864a" text-anchor="end" stroke="#5f864a" stroke-width="0.18">20</text><text x="520.50" y="306.00" font-size="15" fill="#5f864a" text-anchor="end" stroke="#5f864a" stroke-width="0.18">60</text><text x="649.50" y="306.00" font-size="15" fill="#5f864a" text-anchor="end" stroke="#5f864a" stroke-width="0.18">1200</text><text x="102.50" y="329.00" font-size="15" fill="#5f864a" text-anchor="end" stroke="#5f864a" stroke-width="0.18">3</text><text x="111.80" y="329.00" font-size="15" fill="#5f864a" stroke="#5f864a" stroke-width="0.18">Green</text><text x="185.80" y="329.00" font-size="15" fill="#5f864a" stroke="#5f864a" stroke-width="0.18">Small</text><text x="259.80" y="329.00" font-size="15" fill="#5f864a" stroke="#5f864a" stroke-width="0.18">Round</text><text x="398.50" y="329.00" font-size="15" fill="#5f864a" text-anchor="end" stroke="#5f864a" stroke-width="0.18">25</text><text x="520.50" y="329.00" font-size="15" fill="#5f864a" text-anchor="end" stroke="#5f864a" stroke-width="0.18">65</text><text x="649.50" y="329.00" font-size="15" fill="#5f864a" text-anchor="end" stroke="#5f864a" stroke-width="0.18">1625</text><text x="102.50" y="352.00" font-size="15" fill="#5f864a" text-anchor="end" stroke="#5f864a" stroke-width="0.18">4</text><text x="111.80" y="352.00" font-size="15" fill="#5f864a" stroke="#5f864a" stroke-width="0.18">Red</text><text x="185.80" y="352.00" font-size="15" fill="#5f864a" stroke="#5f864a" stroke-width="0.18">Big</text><text x="259.80" y="352.00" font-size="15" fill="#5f864a" stroke="#5f864a" stroke-width="0.18">Angular</text><text x="398.50" y="352.00" font-size="15" fill="#5f864a" text-anchor="end" stroke="#5f864a" stroke-width="0.18">30</text><text x="520.50" y="352.00" font-size="15" fill="#5f864a" text-anchor="end" stroke="#5f864a" stroke-width="0.18">20</text><text x="649.50" y="352.00" font-size="15" fill="#5f864a" text-anchor="end" stroke="#5f864a" stroke-width="0.18">600</text><text x="102.50" y="375.00" font-size="15" fill="#5f864a" text-anchor="end" stroke="#5f864a" stroke-width="0.18">5</text><text x="111.80" y="375.00" font-size="15" fill="#5f864a" stroke="#5f864a" stroke-width="0.18">Red</text><text x="185.80" y="375.00" font-size="15" fill="#5f864a" stroke="#5f864a" stroke-width="0.18">Big</text><text x="259.80" y="375.00" font-size="15" fill="#5f864a" stroke="#5f864a" stroke-width="0.18">Round</text><text x="398.50" y="375.00" font-size="15" fill="#5f864a" text-anchor="end" stroke="#5f864a" stroke-width="0.18">10</text><text x="520.50" y="375.00" font-size="15" fill="#5f864a" text-anchor="end" stroke="#5f864a" stroke-width="0.18">85</text><text x="649.50" y="375.00" font-size="15" fill="#5f864a" text-anchor="end" stroke="#5f864a" stroke-width="0.18">850</text><text x="102.50" y="398.00" font-size="15" fill="#5f864a" text-anchor="end" stroke="#5f864a" stroke-width="0.18">6</text><text x="111.80" y="398.00" font-size="15" fill="#5f864a" stroke="#5f864a" stroke-width="0.18">Blue</text><text x="185.80" y="398.00" font-size="15" fill="#5f864a" stroke="#5f864a" stroke-width="0.18">Average</text><text x="259.80" y="398.00" font-size="15" fill="#5f864a" stroke="#5f864a" stroke-width="0.18">Angular</text><text x="398.50" y="398.00" font-size="15" fill="#5f864a" text-anchor="end" stroke="#5f864a" stroke-width="0.18">10</text><text x="520.50" y="398.00" font-size="15" fill="#5f864a" text-anchor="end" stroke="#5f864a" stroke-width="0.18">10</text><text x="649.50" y="398.00" font-size="15" fill="#5f864a" text-anchor="end" stroke="#5f864a" stroke-width="0.18">100</text><text x="102.50" y="421.00" font-size="15" fill="#5f864a" text-anchor="end" stroke="#5f864a" stroke-width="0.18">7</text><text x="111.80" y="421.00" font-size="15" fill="#5f864a" stroke="#5f864a" stroke-width="0.18">Green</text><text x="185.80" y="421.00" font-size="15" fill="#5f864a" stroke="#5f864a" stroke-width="0.18">Average</text><text x="259.80" y="421.00" font-size="15" fill="#5f864a" stroke="#5f864a" stroke-width="0.18">Round</text><text x="398.50" y="421.00" font-size="15" fill="#5f864a" text-anchor="end" stroke="#5f864a" stroke-width="0.18">15</text><text x="520.50" y="421.00" font-size="15" fill="#5f864a" text-anchor="end" stroke="#5f864a" stroke-width="0.18">35</text><text x="649.50" y="421.00" font-size="15" fill="#5f864a" text-anchor="end" stroke="#5f864a" stroke-width="0.18">525</text><text x="102.50" y="444.00" font-size="15" fill="#5f864a" text-anchor="end" stroke="#5f864a" stroke-width="0.18">8</text><text x="111.80" y="444.00" font-size="15" fill="#5f864a" stroke="#5f864a" stroke-width="0.18">Brown</text><text x="185.80" y="444.00" font-size="15" fill="#5f864a" stroke="#5f864a" stroke-width="0.18">Big</text><text x="259.80" y="444.00" font-size="15" fill="#5f864a" stroke="#5f864a" stroke-width="0.18">Angular</text><text x="398.50" y="444.00" font-size="15" fill="#5f864a" text-anchor="end" stroke="#5f864a" stroke-width="0.18">30</text><text x="520.50" y="444.00" font-size="15" fill="#5f864a" text-anchor="end" stroke="#5f864a" stroke-width="0.18">40</text><text x="649.50" y="444.00" font-size="15" fill="#5f864a" text-anchor="end" stroke="#5f864a" stroke-width="0.18">1200</text><text x="102.50" y="467.00" font-size="15" fill="#5f864a" text-anchor="end" stroke="#5f864a" stroke-width="0.18">9</text><text x="111.80" y="467.00" font-size="15" fill="#5f864a" stroke="#5f864a" stroke-width="0.18">Yellow</text><text x="185.80" y="467.00" font-size="15" fill="#5f864a" stroke="#5f864a" stroke-width="0.18">Big</text><text x="259.80" y="467.00" font-size="15" fill="#5f864a" stroke="#5f864a" stroke-width="0.18">Angular</text><text x="398.50" y="467.00" font-size="15" fill="#5f864a" text-anchor="end" stroke="#5f864a" stroke-width="0.18">20</text><text x="520.50" y="467.00" font-size="15" fill="#5f864a" text-anchor="end" stroke="#5f864a" stroke-width="0.18">40</text><text x="649.50" y="467.00" font-size="15" fill="#5f864a" text-anchor="end" stroke="#5f864a" stroke-width="0.18">800</text><text x="102.50" y="490.00" font-size="15" fill="#5f864a" text-anchor="end" stroke="#5f864a" stroke-width="0.18">10</text><text x="111.80" y="490.00" font-size="15" fill="#5f864a" stroke="#5f864a" stroke-width="0.18">Red</text><text x="185.80" y="490.00" font-size="15" fill="#5f864a" stroke="#5f864a" stroke-width="0.18">Big</text><text x="259.80" y="490.00" font-size="15" fill="#5f864a" stroke="#5f864a" stroke-width="0.18">Angular</text><text x="398.50" y="490.00" font-size="15" fill="#5f864a" text-anchor="end" stroke="#5f864a" stroke-width="0.18">25</text><text x="520.50" y="490.00" font-size="15" fill="#5f864a" text-anchor="end" stroke="#5f864a" stroke-width="0.18">55</text><text x="649.50" y="490.00" font-size="15" fill="#5f864a" text-anchor="end" stroke="#5f864a" stroke-width="0.18">1375</text><text x="102.50" y="513.00" font-size="15" fill="#5f864a" text-anchor="end" stroke="#5f864a" stroke-width="0.18">11</text><text x="111.80" y="513.00" font-size="15" fill="#5f864a" stroke="#5f864a" stroke-width="0.18">Red</text><text x="185.80" y="513.00" font-size="15" fill="#5f864a" stroke="#5f864a" stroke-width="0.18">Big</text><text x="259.80" y="513.00" font-size="15" fill="#5f864a" stroke="#5f864a" stroke-width="0.18">Round</text><text x="398.50" y="513.00" font-size="15" fill="#5f864a" text-anchor="end" stroke="#5f864a" stroke-width="0.18">20</text><text x="520.50" y="513.00" font-size="15" fill="#5f864a" text-anchor="end" stroke="#5f864a" stroke-width="0.18">50</text><text x="649.50" y="513.00" font-size="15" fill="#5f864a" text-anchor="end" stroke="#5f864a" stroke-width="0.18">1000</text><text x="102.50" y="536.00" font-size="15" fill="#5f864a" text-anchor="end" stroke="#5f864a" stroke-width="0.18">12</text><text x="111.80" y="536.00" font-size="15" fill="#5f864a" stroke="#5f864a" stroke-width="0.18">Blue</text><text x="185.80" y="536.00" font-size="15" fill="#5f864a" stroke="#5f864a" stroke-width="0.18">Small</text><text x="259.80" y="536.00" font-size="15" fill="#5f864a" stroke="#5f864a" stroke-width="0.18">Round</text><text x="398.50" y="536.00" font-size="15" fill="#5f864a" text-anchor="end" stroke="#5f864a" stroke-width="0.18">25</text><text x="520.50" y="536.00" font-size="15" fill="#5f864a" text-anchor="end" stroke="#5f864a" stroke-width="0.18">60</text><text x="649.50" y="536.00" font-size="15" fill="#5f864a" text-anchor="end" stroke="#5f864a" stroke-width="0.18">1500</text><text x="102.50" y="559.00" font-size="15" fill="#5f864a" text-anchor="end" stroke="#5f864a" stroke-width="0.18">13</text><text x="111.80" y="559.00" font-size="15" fill="#5f864a" stroke="#5f864a" stroke-width="0.18">Green</text><text x="185.80" y="559.00" font-size="15" fill="#5f864a" stroke="#5f864a" stroke-width="0.18">Small</text><text x="259.80" y="559.00" font-size="15" fill="#5f864a" stroke="#5f864a" stroke-width="0.18">Round</text><text x="398.50" y="559.00" font-size="15" fill="#5f864a" text-anchor="end" stroke="#5f864a" stroke-width="0.18">30</text><text x="520.50" y="559.00" font-size="15" fill="#5f864a" text-anchor="end" stroke="#5f864a" stroke-width="0.18">85</text><text x="649.50" y="559.00" font-size="15" fill="#5f864a" text-anchor="end" stroke="#5f864a" stroke-width="0.18">2550</text><text x="102.50" y="582.00" font-size="15" fill="#5f864a" text-anchor="end" stroke="#5f864a" stroke-width="0.18">14</text><text x="111.80" y="582.00" font-size="15" fill="#5f864a" stroke="#5f864a" stroke-width="0.18">Red</text><text x="185.80" y="582.00" font-size="15" fill="#5f864a" stroke="#5f864a" stroke-width="0.18">Big</text><text x="259.80" y="582.00" font-size="15" fill="#5f864a" stroke="#5f864a" stroke-width="0.18">Angular</text><text x="398.50" y="582.00" font-size="15" fill="#5f864a" text-anchor="end" stroke="#5f864a" stroke-width="0.18">10</text><text x="520.50" y="582.00" font-size="15" fill="#5f864a" text-anchor="end" stroke="#5f864a" stroke-width="0.18">10</text><text x="649.50" y="582.00" font-size="15" fill="#5f864a" text-anchor="end" stroke="#5f864a" stroke-width="0.18">100</text><text x="102.50" y="603.00" font-size="15" fill="#5f864a" text-anchor="end" stroke="#5f864a" stroke-width="0.18">15</text><text x="111.80" y="603.00" font-size="15" fill="#5f864a" stroke="#5f864a" stroke-width="0.18">Red</text><text x="185.80" y="603.00" font-size="15" fill="#5f864a" stroke="#5f864a" stroke-width="0.18">Big</text><text x="259.80" y="603.00" font-size="15" fill="#5f864a" stroke="#5f864a" stroke-width="0.18">Round</text><text x="398.50" y="603.00" font-size="15" fill="#5f864a" text-anchor="end" stroke="#5f864a" stroke-width="0.18">20</text><text x="520.50" y="603.00" font-size="15" fill="#5f864a" text-anchor="end" stroke="#5f864a" stroke-width="0.18">35</text><text x="649.50" y="603.00" font-size="15" fill="#5f864a" text-anchor="end" stroke="#5f864a" stroke-width="0.18">700</text><text x="37.80" y="260.00" font-size="14.6" fill="#4f6c33" font-weight="bold">Item</text><polygon points="94.5,253.5 102.5,253.5 98.5,258" fill="#4a4a4a"/><text x="111.80" y="260.00" font-size="14.6" fill="#4f6c33" font-weight="bold">Color</text><polygon points="168.5,253.5 176.5,253.5 172.5,258" fill="#4a4a4a"/><text x="185.80" y="260.00" font-size="14.6" fill="#4f6c33" font-weight="bold">Size</text><polygon points="242.5,253.5 250.5,253.5 246.5,258" fill="#4a4a4a"/><text x="259.80" y="260.00" font-size="14.6" fill="#4f6c33" font-weight="bold">Shape</text><polygon points="316.5,253.5 324.5,253.5 320.5,258" fill="#4a4a4a"/><text x="333.80" y="260.00" font-size="14.6" fill="#4f6c33" font-weight="bold">Price</text><polygon points="390.5,253.5 398.5,253.5 394.5,258" fill="#4a4a4a"/><text x="407.80" y="260.00" font-size="14.6" fill="#4f6c33" font-weight="bold">Quantity Sold</text><polygon points="512.5,253.5 520.5,253.5 516.5,258" fill="#4a4a4a"/><text x="529.80" y="260.00" font-size="14.6" fill="#4f6c33" font-weight="bold">Total Revenue</text><polygon points="641.5,253.5 649.5,253.5 645.5,258" fill="#4a4a4a"/></svg>
<div class="r" style="left:749px;top:159px;width:335px;height:168px;box-sizing:border-box;border:1px solid #5a5a5a;border-radius:5px;background:#2b2b2b;box-shadow:0 2px 6px rgba(0,0,0,0.5);overflow:hidden;"><div style="position:absolute;left:0;top:0;width:335px;height:56px;background:#3c3c3c;"></div></div>
<svg width="1322" height="610"><text x="811.40" y="176.60" font-size="12" fill="#ffffff" font-weight="bold" textLength="73.0" lengthAdjust="spacingAndGlyphs">Freeze Panes</text><text x="811.40" y="194.00" font-size="12" fill="#e8e8e8" textLength="248.2" lengthAdjust="spacingAndGlyphs">Keep rows and columns visible while the rest of</text><text x="811.40" y="208.30" font-size="12" fill="#e8e8e8" textLength="262.8" lengthAdjust="spacingAndGlyphs">the worksheet scrolls (based on current selection).</text><text x="811.40" y="231.50" font-size="12" fill="#ffffff" font-weight="bold" textLength="89.4" lengthAdjust="spacingAndGlyphs">Freeze Top Row</text><text x="811.40" y="248.40" font-size="12" fill="#e8e8e8" textLength="250.4" lengthAdjust="spacingAndGlyphs">Keep the top row visible while scrolling through</text><text x="811.40" y="263.50" font-size="12" fill="#e8e8e8" textLength="132.4" lengthAdjust="spacingAndGlyphs">the rest of the worksheet.</text><text x="811.40" y="286.40" font-size="12" fill="#ffffff" font-weight="bold" textLength="109.5" lengthAdjust="spacingAndGlyphs">Freeze First Column</text><text x="811.40" y="303.50" font-size="12" fill="#e8e8e8" textLength="227.1" lengthAdjust="spacingAndGlyphs">Keep the first column visible while scrolling</text><text x="811.40" y="318.60" font-size="12" fill="#e8e8e8" textLength="177.3" lengthAdjust="spacingAndGlyphs">through the rest of the worksheet.</text><rect x="811.4" y="178.3" width="5.8" height="1.4" fill="#fff"/><rect x="876.3" y="233.2" width="6.8" height="1.4" fill="#fff"/><rect x="879.4" y="287.8" width="7" height="1.4" fill="#fff"/><rect x="776.4" y="177.1" width="18.3" height="7.2" fill="#1473cc"/><rect x="767.2" y="184.3" width="9.2" height="14.1" fill="#1473cc"/><line x1="776.4" y1="191.5" x2="794.7" y2="191.5" stroke="#c8c8c8" stroke-width="1.1"/><line x1="785.5" y1="184.3" x2="785.5" y2="198.4" stroke="#c8c8c8" stroke-width="1.1"/><line x1="794.7" y1="184.3" x2="794.7" y2="198.4" stroke="#e6e6e6" stroke-width="1.1"/><line x1="776.4" y1="198.4" x2="794.7" y2="198.4" stroke="#e6e6e6" stroke-width="1.1"/><line x1="776.4" y1="177.1" x2="794.7" y2="177.1" stroke="#7cbcf0" stroke-width="1.1"/><line x1="794.7" y1="177.1" x2="794.7" y2="184.3" stroke="#7cbcf0" stroke-width="1.1"/><line x1="767.2" y1="184.3" x2="794.7" y2="184.3" stroke="#7cbcf0" stroke-width="1.1"/><line x1="776.4" y1="177.1" x2="776.4" y2="198.4" stroke="#7cbcf0" stroke-width="1.1"/><line x1="767.2" y1="184.3" x2="767.2" y2="198.4" stroke="#7cbcf0" stroke-width="1.1"/><line x1="767.2" y1="198.4" x2="776.4" y2="198.4" stroke="#7cbcf0" stroke-width="1.1"/><line x1="767.2" y1="191.5" x2="776.4" y2="191.5" stroke="#7cbcf0" stroke-width="1.1"/><line x1="785.5" y1="177.1" x2="785.5" y2="184.3" stroke="#7cbcf0" stroke-width="1.1"/><circle cx="770.1" cy="177.5" r="6.3999999999999995" fill="#15395a"/><line x1="770.10" y1="171.90" x2="770.10" y2="183.10" stroke="#6aa8da" stroke-width="1.9"/><line x1="774.95" y1="174.70" x2="765.25" y2="180.30" stroke="#6aa8da" stroke-width="1.9"/><line x1="774.95" y1="180.30" x2="765.25" y2="174.70" stroke="#6aa8da" stroke-width="1.9"/><rect x="767.5" y="232.5" width="27.5" height="7" fill="#1473cc" stroke="#7cbcf0" stroke-width="1"/><path d="M767.5,239.5 V254.5 H783.5 M795,239.5 V246" fill="none" stroke="#e6e6e6"/><circle cx="790.4" cy="252.2" r="7.2" fill="#10304c"/><line x1="790.40" y1="245.80" x2="790.40" y2="258.60" stroke="#5aa6e0" stroke-width="1.2"/><line x1="795.94" y1="249.00" x2="784.86" y2="255.40" stroke="#5aa6e0" stroke-width="1.2"/><line x1="795.94" y1="255.40" x2="784.86" y2="249.00" stroke="#5aa6e0" stroke-width="1.2"/><rect x="767.5" y="287.5" width="8" height="21" fill="#1473cc" stroke="#7cbcf0" stroke-width="1"/><path d="M775.5,287.5 H795 V301 M775.5,308.5 H783.5" fill="none" stroke="#e6e6e6"/><circle cx="790.4" cy="307.2" r="7.2" fill="#10304c"/><line x1="790.40" y1="300.80" x2="790.40" y2="313.60" stroke="#5aa6e0" stroke-width="1.2"/><line x1="795.94" y1="304.00" x2="784.86" y2="310.40" stroke="#5aa6e0" stroke-width="1.2"/><line x1="795.94" y1="310.40" x2="784.86" y2="304.00" stroke="#5aa6e0" stroke-width="1.2"/></svg>
</div></body></html>
